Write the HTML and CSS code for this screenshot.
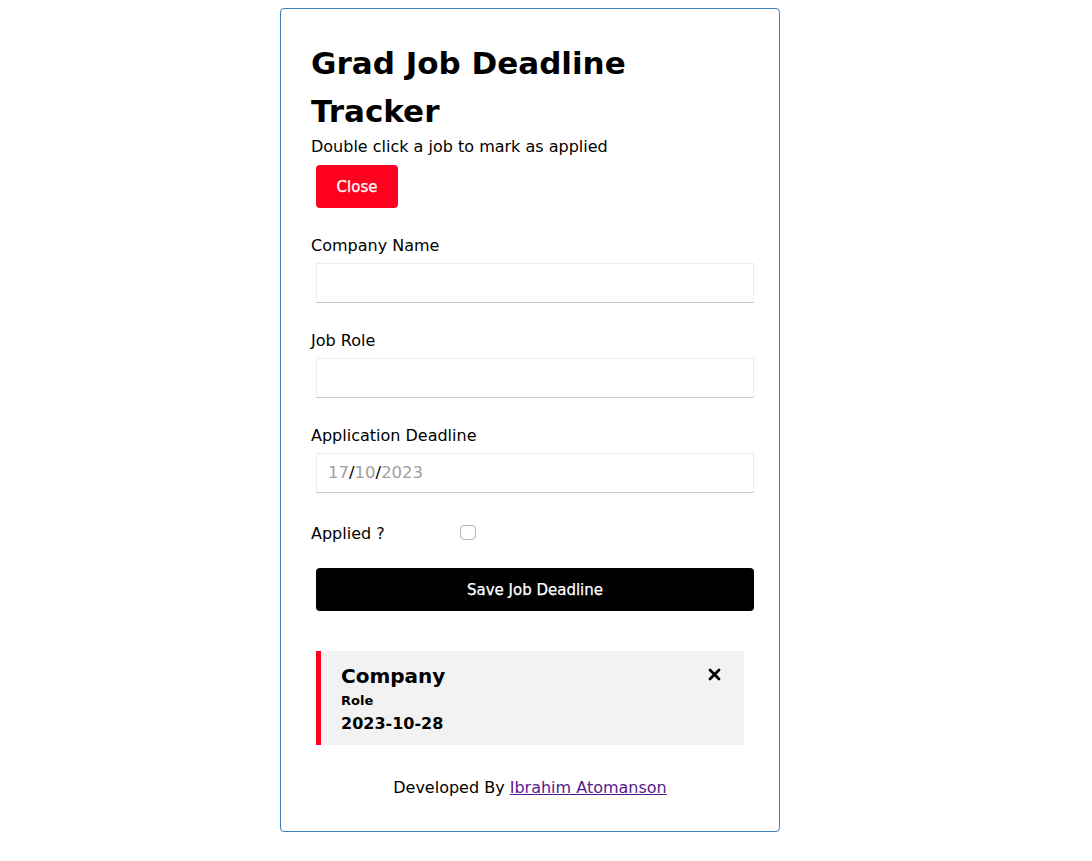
FILE: index.html
```html
<!DOCTYPE html>
<html lang="en">
<head>
<meta charset="utf-8">
<title>Grad Job Deadline Tracker</title>
<link rel="stylesheet" href="styles.css">
</head>
<body>
<main class="card">
  <header class="head">
    <h1 class="title">Grad Job Deadline Tracker</h1>
    <p class="subtitle">Double click a job to mark as applied</p>
    <button class="btn-close" type="button">Close</button>
  </header>

  <form class="form">
    <div class="field">
      <label class="label" for="company">Company Name</label>
      <input class="input" id="company" type="text">
    </div>
    <div class="field">
      <label class="label" for="role">Job Role</label>
      <input class="input" id="role" type="text">
    </div>
    <div class="field">
      <label class="label" for="deadline">Application Deadline</label>
      <div class="input date-input" id="deadline"><span class="dpart">17</span><span class="dsep">/</span><span class="dpart">10</span><span class="dsep">/</span><span class="dpart">2023</span></div>
    </div>
    <div class="check-row">
      <label class="label check-label" for="applied">Applied ?</label>
      <input class="checkbox" id="applied" type="checkbox">
    </div>
    <button class="btn-save" type="button">Save Job Deadline</button>
  </form>

  <section class="jobs">
    <article class="job">
      <div class="job-text">
        <h3 class="job-company">Company</h3>
        <p class="job-role">Role</p>
        <p class="job-date">2023-10-28</p>
      </div>
      <svg class="job-x" width="13" height="13" viewBox="0 0 13 13" aria-hidden="true">
        <path d="M2 2 L11 11 M11 2 L2 11" stroke="#000" stroke-width="2.8" stroke-linecap="round"/>
      </svg>
    </article>
  </section>

  <footer class="footer">Developed By <a class="footer-link" href="#">Ibrahim Atomanson</a></footer>
</main>
</body>
</html>
```
FILE: styles.css
```css
* { box-sizing: border-box; }

body {
  margin: 8px;
  background: #fff;
  color: #000;
  font-family: "DejaVu Sans", "Open Sans", sans-serif;
  font-size: 16px;
  line-height: 1.5;
}

.card {
  width: 500px;
  margin-left: calc(50% - 266px);
  border: 1px solid #3c7bb8;
  border-radius: 4px;
  padding: 30px 30px 25px;
}

.title {
  margin: 0;
  font-size: 31px;
  line-height: 48px;
  font-weight: 700;
}

.subtitle {
  margin: 0;
  font-size: 16px;
  line-height: 24px;
}

.btn-close {
  margin: 6px 5px 5px;
  width: 82px;
  height: 43px;
  border: 0;
  border-radius: 4px;
  background: #ff001e;
  color: #fff;
  font-family: inherit;
  font-size: 15px;
  -webkit-text-stroke: 0.25px #fff;
}

.form {
  margin-top: 21px;
}

.field {
  margin-bottom: 26px;
}

.label {
  display: block;
  font-size: 16px;
  line-height: 24px;
}

.input {
  display: block;
  width: 100%;
  height: 40px;
  margin: 5px 0 5px 5px;
  border: 1px solid #ececec;
  border-bottom-color: #c6c6c6;
  border-radius: 0;
  background: #fff;
  font-family: inherit;
  font-size: 16px;
}

.date-input {
  display: flex;
  align-items: center;
  padding-left: 11px;
  font-size: 16.5px;
}

.dpart { color: #a0a0a0; }
.dsep { color: #000; }

.check-row {
  display: flex;
  align-items: center;
  height: 36px;
  margin-top: -3px;
}

.check-label {
  width: 149px;
}

.checkbox {
  appearance: none;
  -webkit-appearance: none;
  width: 16px;
  height: 15px;
  margin: 0 0 4px;
  border: 1px solid #b4b4b4;
  border-radius: 4px;
  background: #fff;
}

.btn-save {
  display: block;
  width: 100%;
  height: 43px;
  margin: 16px 0 0 5px;
  border: 0;
  border-radius: 4px;
  background: #000;
  color: #fff;
  font-family: inherit;
  font-size: 15px;
  -webkit-text-stroke: 0.25px #fff;
}

.jobs {
  margin-top: 40px;
  padding: 0 5px;
}

.job {
  display: flex;
  justify-content: space-between;
  align-items: flex-start;
  height: 94px;
  background: #f2f2f2;
  border-left: 5px solid #ff001e;
  padding: 12px 23px 9px 20px;
}

.job-company {
  margin: 0;
  font-size: 20px;
  line-height: 26px;
  font-weight: 700;
}

.job-role {
  margin: 0;
  font-size: 13px;
  line-height: 23px;
  font-weight: 700;
}

.job-date {
  margin: 0;
  font-size: 16px;
  line-height: 24px;
  font-weight: 700;
}

.job-x {
  margin-top: 5px;
  flex: none;
}

.footer {
  margin-top: 31px;
  text-align: center;
  font-size: 16px;
  line-height: 24px;
  padding-bottom: 6px;
}

.footer-link {
  color: #551a8b;
  text-decoration: underline;
}
```
